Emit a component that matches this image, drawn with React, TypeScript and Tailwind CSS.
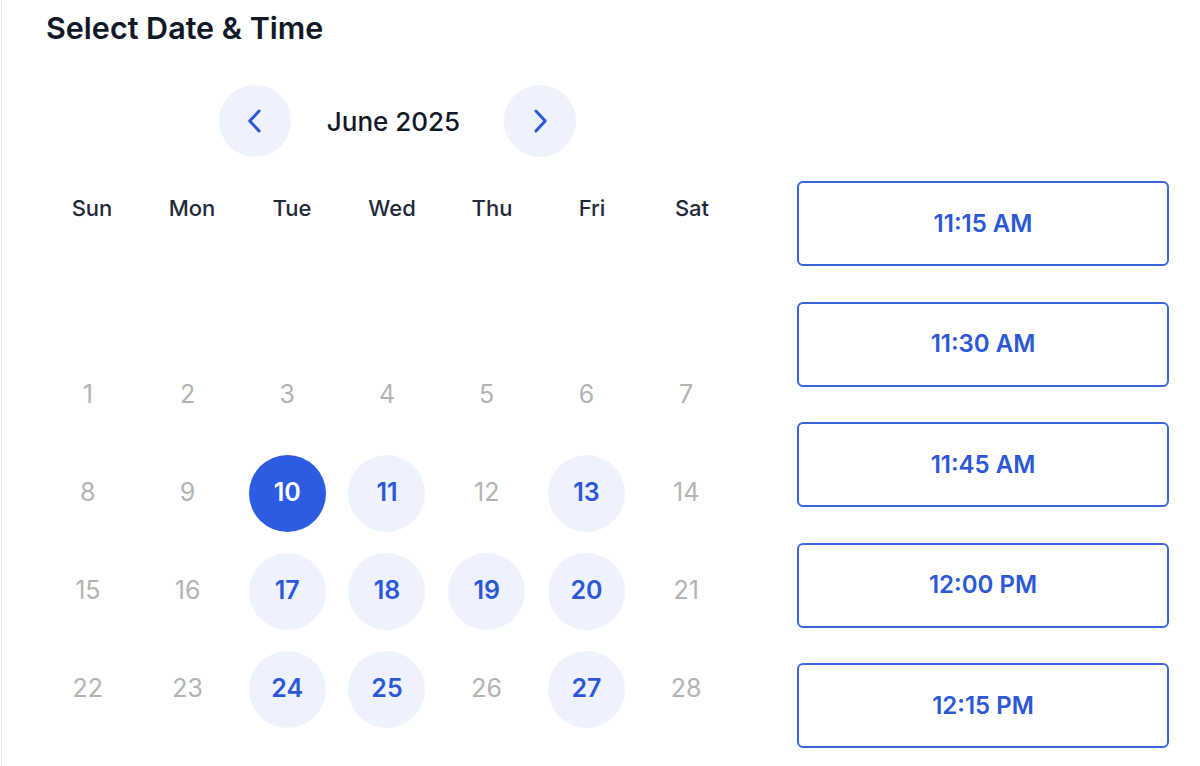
const weekDays = ['Sun', 'Mon', 'Tue', 'Wed', 'Thu', 'Fri', 'Sat'];

// June 2025 rows, first row left blank like the live widget
const weeks: (number | null)[][] = [
  [null, null, null, null, null, null, null],
  [1, 2, 3, 4, 5, 6, 7],
  [8, 9, 10, 11, 12, 13, 14],
  [15, 16, 17, 18, 19, 20, 21],
  [22, 23, 24, 25, 26, 27, 28],
];

const available = [11, 13, 17, 18, 19, 20, 24, 25, 27];
const selected = 10;

const slots = ['11:15 AM', '11:30 AM', '11:45 AM', '12:00 PM', '12:15 PM'];

function Chevron({ dir }: { dir: 'left' | 'right' }) {
  return (
    <svg width="28" height="28" viewBox="0 0 24 24" fill="none" stroke="currentColor" strokeWidth="2.6" strokeLinecap="round" strokeLinejoin="round">
      {dir === 'left' ? <path d="M15.5 3.5 L7.5 12 L15.5 20.5" /> : <path d="M8.5 3.5 L16.5 12 L8.5 20.5" />}
    </svg>
  );
}

function DayCell({ day }: { day: number | null }) {
  if (day === null) return <div className="h-[98px]" />;

  let circle = 'text-[#b3b3b3] font-normal';
  if (day === selected) circle = 'bg-[#2c5ce2] text-white font-semibold';
  else if (available.includes(day)) circle = 'bg-[#eef2fe] text-[#2c58d8] font-semibold';

  return (
    <div className="h-[98px] flex items-center justify-center">
      <button className={`w-[77px] h-[77px] rounded-full flex items-center justify-center text-[25px] ${circle}`}>
        {day}
      </button>
    </div>
  );
}

export default function App() {
  return (
    <div className="min-h-[766px] bg-white ml-px border-l border-[#e5e7eb] pl-[40px]" style={{ fontFamily: 'Inter, "Noto Sans", sans-serif' }}>
      {/* Title */}
      <h2 className="pt-[10px] ml-[4px] text-[30.5px] leading-[36px] font-semibold text-[#111827]">
        Select Date &amp; Time
      </h2>

      <div className="flex gap-[55px]">
        {/* Calendar */}
        <div className="w-[700px] shrink-0">
          <div className="mt-[39px] flex items-center justify-center gap-[36px] pl-[11px]">
            <button className="w-[72px] h-[72px] rounded-full bg-[#eef2fd] flex items-center justify-center text-[#2c58d8]">
              <Chevron dir="left" />
            </button>
            <span className="mr-[8px] text-[26px] font-medium text-[#111827]">June 2025</span>
            <button className="w-[72px] h-[72px] rounded-full bg-[#eef2fd] flex items-center justify-center text-[#2c58d8]">
              <Chevron dir="right" />
            </button>
          </div>

          <div className="mt-[31px] grid grid-cols-7 h-[40px] items-center">
            {weekDays.map((d) => (
              <div key={d} className="text-center text-[22px] font-medium text-[#1f2937]">
                {d}
              </div>
            ))}
          </div>

          <div className="mt-[20px] -ml-1 w-[698px] grid grid-cols-7">
            {weeks.flat().map((day, i) => (
              <DayCell key={i} day={day} />
            ))}
          </div>
        </div>

        {/* Time slots */}
        <div className="w-[372px] shrink-0 pt-[135px] flex flex-col gap-[35.5px]">
          {slots.map((s) => (
            <button
              key={s}
              className="h-[85px] rounded-[6px] border-2 border-[#3a66dc] bg-white text-[24px] font-semibold text-[#2c58d8]"
            >
              {s}
            </button>
          ))}
        </div>
      </div>
    </div>
  );
}
